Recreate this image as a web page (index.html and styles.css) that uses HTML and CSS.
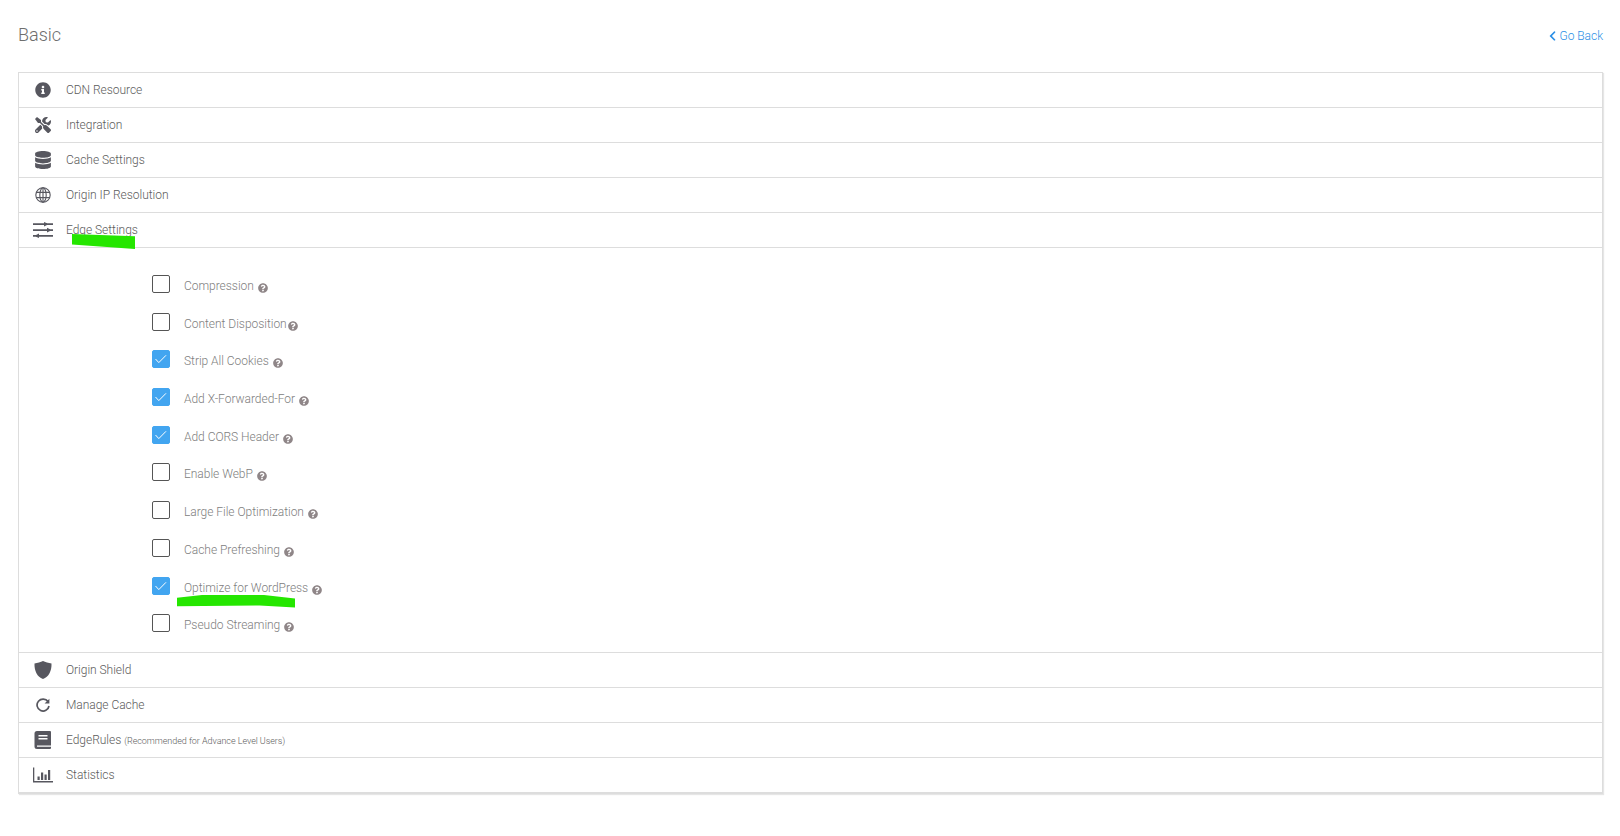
FILE: index.html
```html
<!DOCTYPE html>
<html lang="en">
<head>
<meta charset="utf-8">
<title>Basic</title>
<link rel="stylesheet" href="styles.css">
</head>
<body>
<svg class="defs" width="0" height="0" aria-hidden="true">
  <symbol id="help" viewBox="0 0 512 512"><path d="M504 256c0 136.997-111.043 248-248 248S8 392.997 8 256C8 119.083 119.043 8 256 8s248 111.083 248 248zM262.655 90c-54.497 0-89.255 22.957-116.549 63.758-3.536 5.286-2.353 12.415 2.715 16.258l34.699 26.31c5.205 3.947 12.621 3.008 16.665-2.122 17.864-22.658 30.113-35.797 57.303-35.797 20.429 0 45.698 13.148 45.698 32.958 0 14.976-12.363 22.667-32.534 33.976C247.128 238.528 216 254.941 216 296v4c0 6.627 5.373 12 12 12h56c6.627 0 12-5.373 12-12v-1.333c0-28.462 83.186-29.647 83.186-106.667 0-58.002-60.165-102-116.531-102zM256 338c-25.365 0-46 20.635-46 46 0 25.364 20.635 46 46 46s46-20.636 46-46c0-25.365-20.635-46-46-46z"/></symbol>
  <symbol id="tick" viewBox="0 0 16 16"><path d="M2.500 8l3.300 3.600L13 4.300" fill="none" stroke="#fff" stroke-width="1"/></symbol>
</svg>
<main class="page">
  <header class="top">
    <h1 class="title">Basic</h1>
    <a class="back" href="#"><svg class="chev" viewBox="0 0 320 512"><path d="M34.52 239.03L228.87 44.69c9.37-9.37 24.57-9.37 33.94 0l22.67 22.67c9.36 9.36 9.37 24.52.04 33.9L131.49 256l154.02 154.75c9.34 9.38 9.32 24.54-.04 33.9l-22.67 22.67c-9.37 9.37-24.57 9.37-33.94 0L34.52 272.97c-9.37-9.37-9.37-24.57 0-33.94z"/></svg>Go Back</a>
  </header>
  <section class="panel">
    <div class="row"><span class="ico"><svg class="i16" viewBox="0 0 512 512"><path d="M256 8C119.043 8 8 119.083 8 256c0 136.997 111.043 248 248 248s248-111.003 248-248C504 119.083 392.957 8 256 8zm0 110c23.196 0 42 18.804 42 42s-18.804 42-42 42-42-18.804-42-42 18.804-42 42-42zm56 254c0 6.627-5.373 12-12 12h-88c-6.627 0-12-5.373-12-12v-24c0-6.627 5.373-12 12-12h12v-64h-12c-6.627 0-12-5.373-12-12v-24c0-6.627 5.373-12 12-12h64c6.627 0 12 5.373 12 12v100h12c6.627 0 12 5.373 12 12v24z"/></svg></span>CDN Resource</div>
    <div class="row"><span class="ico"><svg class="i16" viewBox="0 0 512 512"><path d="M501.1 395.7L384 278.600c-23.100-23.100-57.600-27.600-85.400-13.900L192 158.100V96L64 0 0 64l96 128h62.100l106.600 106.600c-13.600 27.800-9.200 62.300 13.900 85.400l117.100 117.100c14.600 14.600 38.200 14.600 52.700 0l52.700-52.700c14.500-14.600 14.500-38.200 0-52.700zM331.700 225c28.300 0 54.900 11 74.900 31l19.400 19.400c15.800-6.900 30.800-16.500 43.800-29.500 37.100-37.100 49.700-89.300 37.900-136.700-2.200-9-13.500-12.100-20.100-5.500l-74.400 74.400-67.900-11.300L334 98.900l74.400-74.400c6.600-6.600 3.400-17.900-5.700-20.200-47.400-11.700-99.600.9-136.600 37.900-28.500 28.500-41.900 66.100-41.200 103.600l82.100 82.100c8.100-1.900 16.500-2.900 24.700-2.900zm-103.900 82l-56.700-56.700L18.700 402.800c-25 25-25 65.500 0 90.500s65.500 25 90.500 0l123.600-123.600c-7.600-19.900-9.900-41.600-5-62.700zM64 472c-13.200 0-24-10.800-24-24 0-13.300 10.700-24 24-24s24 10.700 24 24c0 13.200-10.700 24-24 24z"/></svg></span>Integration</div>
    <div class="row"><span class="ico"><svg class="i18" viewBox="0 0 448 512"><path d="M448 73.143v45.714C448 159.143 347.667 192 224 192S0 159.143 0 118.857V73.143C0 32.857 100.333 0 224 0s224 32.857 224 73.143zM448 176v102.857C448 319.143 347.667 352 224 352S0 319.143 0 278.857V176c48.125 33.143 136.208 48.572 224 48.572S399.874 209.143 448 176zm0 160v102.857C448 479.143 347.667 512 224 512S0 479.143 0 438.857V336c48.125 33.143 136.208 48.572 224 48.572S399.874 369.143 448 336z"/></svg></span>Cache Settings</div>
    <div class="row"><span class="ico"><svg class="i16" viewBox="0 0 16 16"><g class="line"><circle cx="8" cy="8" r="7.200"/><ellipse cx="8" cy="8" rx="3.200" ry="7.200"/><path d="M8 .8v14.400M1.200 5.400h13.600M1.200 10.600h13.600"/></g></svg></span>Origin IP Resolution</div>
    <div class="row"><span class="ico"><svg class="i20" viewBox="0 0 20 16"><path d="M0 1.300h20V3H0zM0 7.200h20v1.700H0zM0 13h20v1.700H0z"/><path d="M11 0l3 1.300V3l-3 1.500zM14 5.800l3 1.400v1.700l-3 1.500zM6 11.500L3 13v1.700L6 16z"/></svg></span>Edge Settings<span class="mark mark-a"></span></div>
    <div class="options">
      <label class="opt"><span class="box"></span><span class="txt">Compression</span><svg class="help"><use href="#help"/></svg></label>
      <label class="opt"><span class="box"></span><span class="txt tight">Content Disposition</span><svg class="help"><use href="#help"/></svg></label>
      <label class="opt"><span class="box on"><svg class="tick"><use href="#tick"/></svg></span><span class="txt">Strip All Cookies</span><svg class="help"><use href="#help"/></svg></label>
      <label class="opt"><span class="box on"><svg class="tick"><use href="#tick"/></svg></span><span class="txt">Add X-Forwarded-For</span><svg class="help"><use href="#help"/></svg></label>
      <label class="opt"><span class="box on"><svg class="tick"><use href="#tick"/></svg></span><span class="txt">Add CORS Header</span><svg class="help"><use href="#help"/></svg></label>
      <label class="opt"><span class="box"></span><span class="txt">Enable WebP</span><svg class="help"><use href="#help"/></svg></label>
      <label class="opt"><span class="box"></span><span class="txt">Large File Optimization</span><svg class="help"><use href="#help"/></svg></label>
      <label class="opt"><span class="box"></span><span class="txt">Cache Prefreshing</span><svg class="help"><use href="#help"/></svg></label>
      <label class="opt"><span class="box on"><svg class="tick"><use href="#tick"/></svg></span><span class="txt">Optimize for WordPress</span><svg class="help"><use href="#help"/></svg><span class="mark mark-b"></span></label>
      <label class="opt"><span class="box"></span><span class="txt">Pseudo Streaming</span><svg class="help"><use href="#help"/></svg></label>
    </div>
    <div class="row"><span class="ico"><svg class="i18" viewBox="0 0 18 18"><path d="M9 0c2.300 1 5.500 2 8.500 2.400C17.800 9.800 14.800 15.800 9 18 3.200 15.800.2 9.800.5 2.400 3.500 2 6.700 1 9 0z"/></svg></span>Origin Shield</div>
    <div class="row"><span class="ico"><svg class="i14" viewBox="0 0 14 14"><path class="line thick" d="M12 3.600A6 6 0 1 0 13 8"/><path d="M13.400.8v4.800H8.600z"/></svg></span>Manage Cache</div>
    <div class="row"><span class="ico"><svg class="i18" viewBox="0 0 18 18"><path fill-rule="evenodd" d="M3 0h13a1 1 0 0 1 1 1v16a1 1 0 0 1-1 1H3a2.500 2.500 0 0 1-2.500-2.500v-13A2.500 2.500 0 0 1 3 0zM4.500 4v1.500h9V4zM4.500 7v1.500h9V7zM3 14.500v1.200h14v-1.200z"/></svg></span>EdgeRules<small class="note">(Recommended for Advance Level Users)</small></div>
    <div class="row"><span class="ico"><svg class="i20" viewBox="0 0 20 15"><path d="M0 0h1.300v13.500H20V15H0zM4.500 9h2.200v3.500H4.500zM8 5h2.200v7.500H8zM11.500 7h2.200v5.500h-2.200zM15 2.500h2.200v10H15z"/></svg></span>Statistics</div>
  </section>
</main>
</body>
</html>
```
FILE: styles.css
```css
* { box-sizing: border-box; }
html, body { margin: 0; background: #fff; }
body { font-family: Roboto, "Liberation Sans", sans-serif; font-weight: 300; color: #5c5c5c; font-size: 12px; letter-spacing: -0.03px; }
.defs { position: absolute; }
.page { width: 1620px; height: 836px; padding: 0 17px 0 18px; }
.top { height: 72px; display: flex; justify-content: space-between; align-items: center; padding-bottom: 3px; }
.title { margin: 0; font-size: 18px; font-weight: 300; color: #6e6e6e; letter-spacing: 0; }
.back { color: #2b8fe6; text-decoration: none; font-size: 12px; display: flex; align-items: center; gap: 3px; padding-top: 2px; }
.chev { width: 7px; height: 12px; fill: #2b8fe6; }
.panel { border: 1px solid #ddd; border-bottom-width: 2px; box-shadow: 1px 1px 1px #e6e6e6; }
.row { position: relative; height: 35px; display: flex; align-items: center; border-bottom: 1px solid #ddd; }
.row:last-child { height: 34px; border-bottom: 0; }
.ico { width: 47px; display: flex; justify-content: center; flex: none; }
.ico svg { fill: #57575f; }
.i14 { width: 14px; height: 14px; }
.i16 { width: 16px; height: 16px; }
.i18 { width: 18px; height: 18px; }
.i20 { width: 20px; height: 16px; }
.line { stroke: #57575f; stroke-width: 1.1; }
.ico svg .line { fill: none; }
.thick { stroke-width: 1.7; }
.note { font-size: 9px; margin-left: 3px; padding-top: 2px; letter-spacing: -0.05px; }
.options { height: 405px; padding: 27px 0 0 133px; border-bottom: 1px solid #ddd; }
.opt { position: relative; height: 37.7px; display: flex; align-items: flex-start; color: #808080; }
.box { width: 18px; height: 18px; flex: none; border: 1px solid #555; border-radius: 2px; background: #fff; }
.box.on { background: #42a5f0; border-color: #42a5f0; }
.tick { display: block; width: 16px; height: 16px; }
.txt { margin: 4px 0 0 14px; line-height: 14px; }
.help { width: 10px; height: 10px; margin: 8px 0 0 4px; fill: #8f8688; flex: none; }
.txt.tight + .help { margin-left: 1px; }
.mark { position: absolute; display: block; background: #25e600; }
.mark-a { left: 53px; top: 21px; width: 63px; height: 15px; clip-path: polygon(0 0, 100% 15%, 100% 100%, 50% 85%, 0 70%); }
.mark-b { left: 25px; top: 18px; width: 118px; height: 13px; clip-path: polygon(0 25%, 25% 0, 70% 0, 100% 30%, 100% 100%, 70% 85%, 0 90%); }
```
